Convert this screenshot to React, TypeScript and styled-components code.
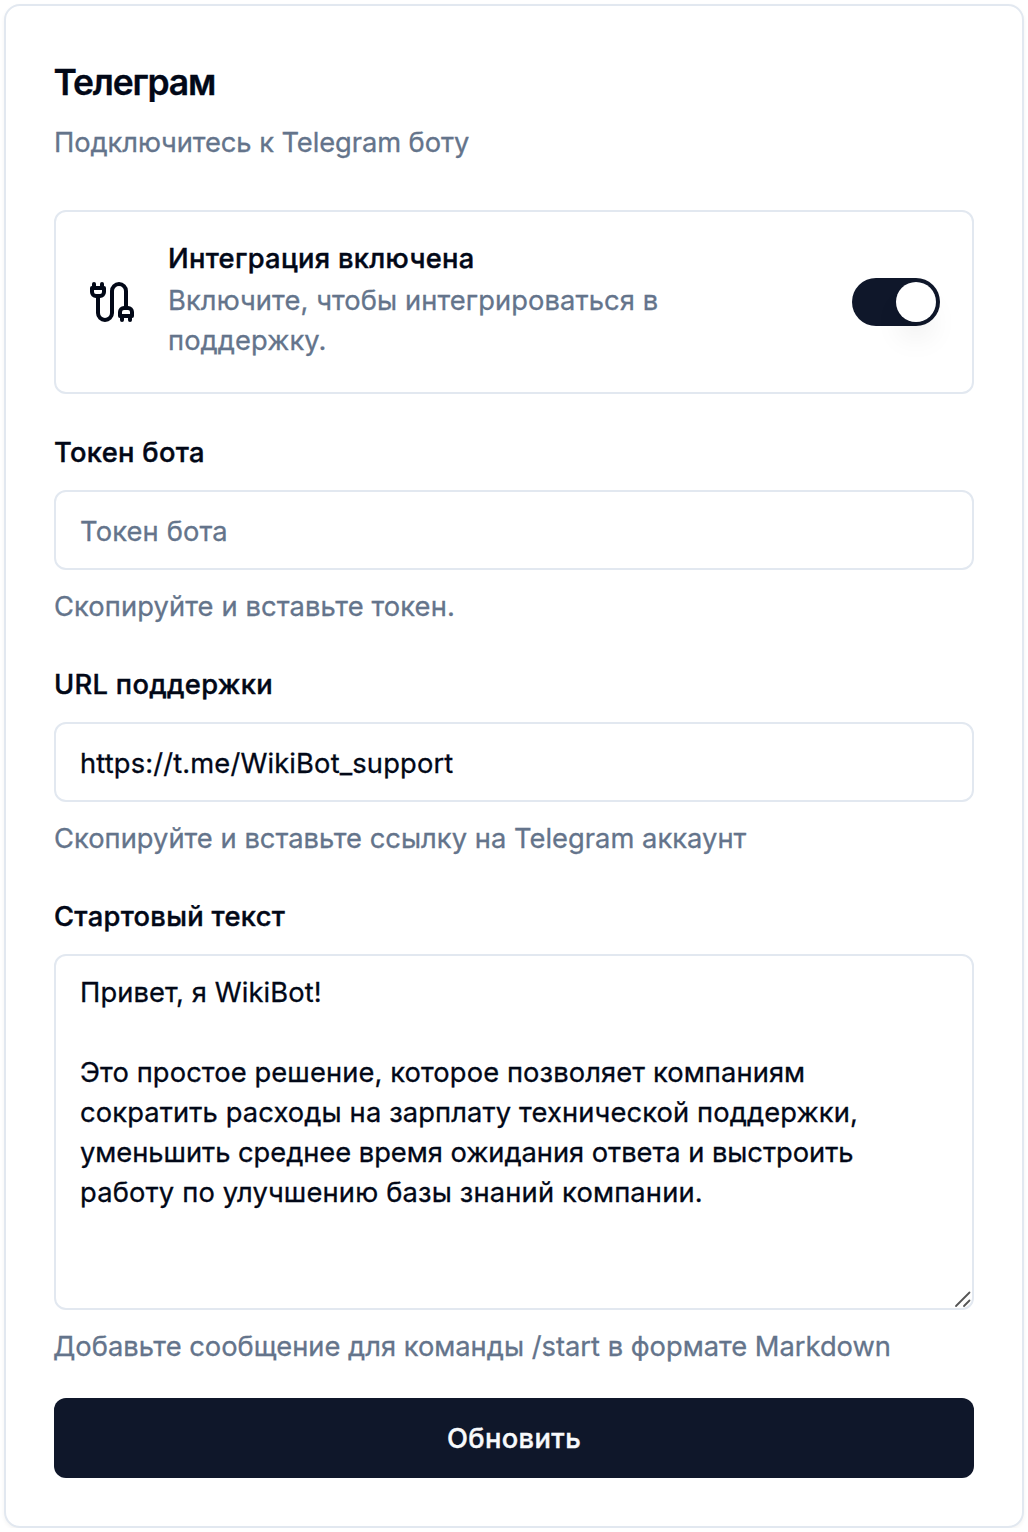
import React, { useState } from "react";
import styled, { createGlobalStyle } from "styled-components";

const GlobalStyle = createGlobalStyle`
  * { box-sizing: border-box; }
  body {
    margin: 0;
    background: #fff;
    color: #020817;
    font-family: Inter, "Liberation Sans", sans-serif;
    font-size: 27.3px;
    -webkit-font-smoothing: antialiased;
    -webkit-text-stroke: 0.3px currentColor;
  }
`;

const Page = styled.main`
  width: 1028px;
  height: 1528px;
  padding: 4px 4px 0;
  overflow: hidden;
`;

const Card = styled.form`
  display: flex;
  flex-direction: column;
  width: 1020px;
  height: 1524px;
  padding: 48px;
  border: 2px solid #e2e8f0;
  border-radius: 16px;
  background: #fff;
  box-shadow: 0 2px 4px rgba(0, 0, 0, 0.05);
`;

const Header = styled.header`
  display: flex;
  flex-direction: column;
  gap: 11px;
  height: 156px;
`;

const Title = styled.h1`
  margin: 0 0 0 -0.5px;
  font-size: 35.5px;
  font-weight: 600;
  line-height: 58px;
  letter-spacing: -1.2px;
  white-space: nowrap;
`;

const Muted = styled.p<{ $tracking?: number; $shift?: number }>`
  margin: 0 0 0 ${(p) => p.$shift ?? 0}px;
  color: #64748b;
  line-height: 40px;
  letter-spacing: ${(p) => p.$tracking ?? 0}px;
`;

const Integration = styled.section`
  display: flex;
  align-items: center;
  gap: 32px;
  height: 184px;
  padding: 32px;
  border: 2px solid #e2e8f0;
  border-radius: 12px;
`;

const IntegrationText = styled.div`
  display: flex;
  flex: 1;
  flex-direction: column;
  align-self: flex-start;
  gap: 7px;
  min-width: 0;
  padding-right: 100px;
`;

const Label = styled.label`
  font-weight: 500;
  line-height: 30px;
  letter-spacing: 0.31px;
  -webkit-text-stroke-width: 0.4px;
`;

const Switch = styled.button<{ $on: boolean }>`
  display: flex;
  flex: none;
  align-items: center;
  justify-content: ${(p) => (p.$on ? "flex-end" : "flex-start")};
  width: 88px;
  height: 48px;
  padding: 4px;
  border: 0;
  border-radius: 24px;
  background: ${(p) => (p.$on ? "#0f172a" : "#e2e8f0")};
`;

const Thumb = styled.span`
  width: 40px;
  height: 40px;
  border-radius: 50%;
  background: #fff;
  box-shadow: 0 20px 30px -6px rgba(0, 0, 0, 0.1), 0 8px 12px -8px rgba(0, 0, 0, 0.05);
`;

const Fields = styled.div`
  display: flex;
  flex-direction: column;
  gap: 43px;
  margin-top: 44px;
`;

const Field = styled.div`
  display: flex;
  flex-direction: column;

  ${Label} { margin-bottom: 22px; }
  ${Muted} { margin-top: 17px; }
`;

const Input = styled.input`
  height: 80px;
  padding: 2px 24px 0;
  border: 2px solid #e2e8f0;
  border-radius: 12px;
  outline: 0;
  background: #fff;
  color: #020817;
  font: inherit;
  letter-spacing: 0.15px;

  &::placeholder { color: #64748b; opacity: 1; }
`;

const AreaFrame = styled.div`
  position: relative;
  height: 356px;
`;

const Area = styled.div`
  height: 100%;
  padding: 17px 24px 15px;
  border: 2px solid #e2e8f0;
  border-radius: 12px;
  outline: 0;
  overflow: hidden;
  line-height: 40px;
  white-space: pre;
`;

const Line = styled.div<{ $tracking: number }>`
  height: 40px;
  letter-spacing: ${(p) => p.$tracking}px;
`;

const Grip = styled.svg`
  position: absolute;
  right: 2px;
  bottom: 2px;
`;

const Submit = styled.button`
  height: 80px;
  margin-top: 31px;
  border: 0;
  border-radius: 12px;
  background: #0f172a;
  color: #f8fafc;
  font: inherit;
  font-weight: 500;
  letter-spacing: 0.38px;
  -webkit-text-stroke: 0.4px currentColor;
`;

const CableIcon = () => (
  <svg width="48" height="48" viewBox="0 0 24 24" fill="none" stroke="currentColor" strokeWidth="2" strokeLinecap="round" strokeLinejoin="round">
    <path d="M4 9a2 2 0 0 1-2-2V5h6v2a2 2 0 0 1-2 2Z" />
    <path d="M3 5V3" />
    <path d="M7 5V3" />
    <path d="M19 15V6.5a3.5 3.5 0 0 0-7 0v11a3.5 3.5 0 0 1-7 0V9" />
    <path d="M17 21v-2" />
    <path d="M21 21v-2" />
    <path d="M22 19h-6v-2a2 2 0 0 1 2-2h2a2 2 0 0 1 2 2Z" />
  </svg>
);

const START_LINES = [
  { text: "Привет, я WikiBot!", tracking: 0.1 },
  { text: "", tracking: 0 },
  { text: "Это простое решение, которое позволяет компаниям", tracking: 0.11 },
  { text: "сократить расходы на зарплату технической поддержки,", tracking: 0.13 },
  { text: "уменьшить среднее время ожидания ответа и выстроить", tracking: -0.03 },
  { text: "работу по улучшению базы знаний компании.", tracking: 0.17 },
];

export default function App() {
  const [enabled, setEnabled] = useState(true);

  return (
    <>
      <GlobalStyle />
      <Page>
        <Card onSubmit={(e) => e.preventDefault()}>
          <Header>
            <Title>Телеграм</Title>
            <Muted $tracking={-0.08}>Подключитесь к Telegram боту</Muted>
          </Header>
          <Integration>
            <CableIcon />
            <IntegrationText>
              <Label as="span">Интеграция включена</Label>
              <Muted $tracking={0.09}>Включите, чтобы интегрироваться в поддержку.</Muted>
            </IntegrationText>
            <Switch type="button" role="switch" aria-checked={enabled} $on={enabled} onClick={() => setEnabled(!enabled)}>
              <Thumb />
            </Switch>
          </Integration>
          <Fields>
            <Field>
              <Label htmlFor="token">Токен бота</Label>
              <Input id="token" placeholder="Токен бота" />
              <Muted $tracking={0.11}>Скопируйте и вставьте токен.</Muted>
            </Field>
            <Field>
              <Label htmlFor="url">URL поддержки</Label>
              <Input id="url" defaultValue="https://t.me/WikiBot_support" />
              <Muted $tracking={0.03}>Скопируйте и вставьте ссылку на Telegram аккаунт</Muted>
            </Field>
            <Field>
              <Label as="span" id="start-label">Стартовый текст</Label>
              <AreaFrame>
                <Area role="textbox" aria-multiline aria-labelledby="start-label" contentEditable suppressContentEditableWarning spellCheck={false}>
                  {START_LINES.map((line, i) => (
                    <Line key={i} $tracking={line.tracking}>{line.text}</Line>
                  ))}
                </Area>
                <Grip width="18" height="18" viewBox="0 0 18 18" stroke="#555" strokeWidth="1.8" strokeLinecap="round">
                  <path d="M2 16 15.5 2.5M10 16l5.5-5.5" />
                </Grip>
              </AreaFrame>
              <Muted $shift={-1}>Добавьте сообщение для команды /start в формате Markdown</Muted>
            </Field>
          </Fields>
          <Submit type="submit">Обновить</Submit>
        </Card>
      </Page>
    </>
  );
}
